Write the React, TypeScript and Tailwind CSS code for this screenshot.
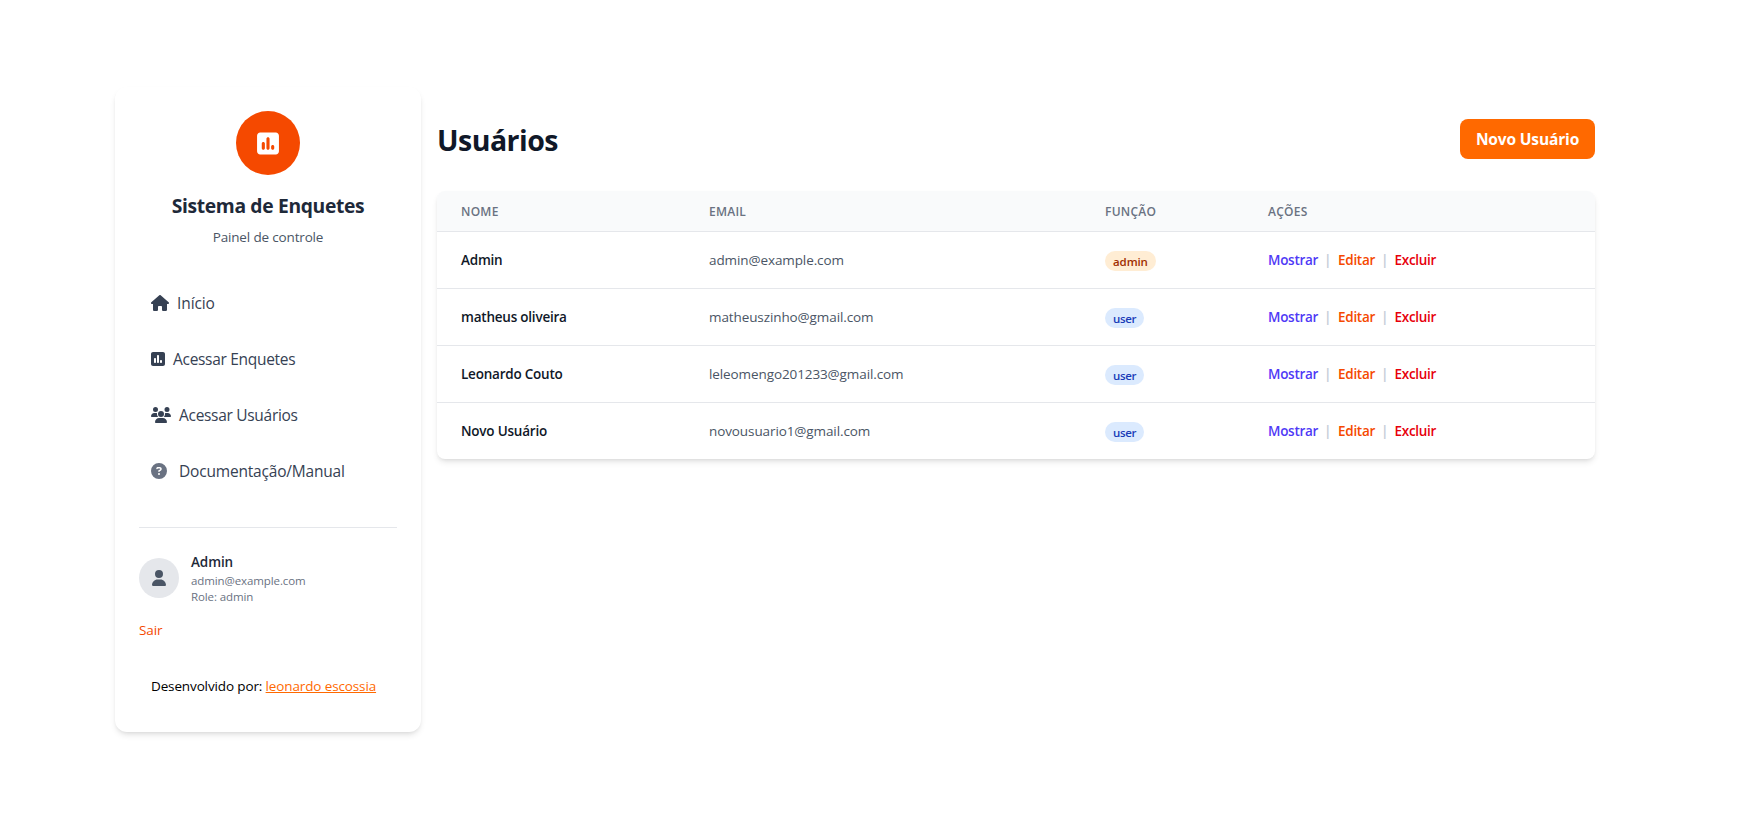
import { FaHouse, FaSquarePollVertical, FaUsers, FaCircleQuestion, FaUser } from "react-icons/fa6";

const users = [
  { name: "Admin", email: "admin@example.com", role: "admin" },
  { name: "matheus oliveira", email: "matheuszinho@gmail.com", role: "user" },
  { name: "Leonardo Couto", email: "leleomengo201233@gmail.com", role: "user" },
  { name: "Novo Usuário", email: "novousuario1@gmail.com", role: "user" },
];

function Sidebar() {
  return (
    <aside className="w-[306px] h-[645px] shrink-0 rounded-xl bg-white p-6 shadow-md">
      <div className="flex flex-col items-center">
        <div className="flex size-16 items-center justify-center rounded-full bg-[#f54900] text-white">
          <FaSquarePollVertical className="h-[25px] w-[22px]" />
        </div>
        <h2 className="mt-4 h-7 pt-px text-[19.3px] leading-7 font-bold tracking-[-0.34px] whitespace-nowrap text-[#1e2939]">Sistema de Enquetes</h2>
        <p className="mt-2 text-[13.5px] leading-5 tracking-[-0.16px] text-[#4a5565]">Painel de controle</p>
      </div>
      <nav className="mt-8 flex flex-col gap-2 text-[15.5px] leading-6 tracking-[-0.3px] text-[#364153]">
        <a className="flex h-12 items-center gap-2 px-3 tracking-[-0.1px]"><FaHouse className="h-4 w-[18px]" />Início</a>
        <a className="flex h-12 items-center gap-2 px-3"><FaSquarePollVertical className="h-4 w-[14px]" />Acessar Enquetes</a>
        <a className="flex h-12 items-center gap-2 px-3"><FaUsers className="h-4 w-5" />Acessar Usuários</a>
        <a className="flex h-12 items-center gap-3 px-3 tracking-[-0.19px]"><FaCircleQuestion className="size-4 text-[#6a7282]" />Documentação/Manual</a>
      </nav>
      <div className="mt-8 border-t border-[#e5e7eb] pt-6">
        <div className="flex items-center gap-3">
          <div className="flex size-10 items-center justify-center rounded-full bg-[#e5e7eb] text-[#4a5565]">
            <FaUser className="h-4 w-[14px]" />
          </div>
          <div>
            <p className="text-[13.5px] leading-5 font-semibold tracking-[-0.1px] text-[#1e2939]">Admin</p>
            <div className="h-8 pt-px text-[11.5px] leading-4 tracking-[-0.1px] text-[#6a7282]">
              <p>admin@example.com</p>
              <p>Role: admin</p>
            </div>
          </div>
        </div>
        <p className="mt-4 text-[13.5px] leading-5 tracking-[-0.13px] text-[#f54900]">Sair</p>
      </div>
      <p className="mt-6 p-3 text-[13.5px] leading-5 tracking-[-0.13px] whitespace-nowrap text-black">
        Desenvolvido por: <a className="text-[#ff6900] underline">leonardo escossia</a>
      </p>
    </aside>
  );
}

function UserTable() {
  return (
    <div className="mt-8 overflow-hidden rounded-lg bg-white shadow-md">
      <div className="grid h-10 grid-cols-[248px_396px_163px_1fr] items-center bg-[#f9fafb] pt-0.5 text-[12px] leading-4 font-semibold tracking-[0.25px] text-[#6a7282] uppercase">
        <span className="pl-6">Nome</span>
        <span className="pl-6">Email</span>
        <span className="pl-6">Função</span>
        <span className="pl-6">Ações</span>
      </div>
      {users.map((u) => (
        <div key={u.email} className="grid h-[57px] grid-cols-[248px_396px_163px_1fr] items-center border-t border-[#e5e7eb] text-[13.5px] leading-5 tracking-[-0.1px]">
          <span className="pl-6 font-semibold tracking-[-0.22px] text-[#101828]">{u.name}</span>
          <span className="pl-6 text-[#4a5565]">{u.email}</span>
          <span className="flex pt-0.5 pl-6">
            <span className={u.role === "admin"
              ? "h-5 rounded-full bg-[#ffedd4] px-2 text-[11.5px] leading-[22px] font-semibold tracking-[-0.1px] text-[#9f2d00]"
              : "h-5 rounded-full bg-[#dbeafe] px-2 text-[11.5px] leading-[22px] font-semibold tracking-[-0.35px] text-[#193cb8]"}>{u.role}</span>
          </span>
          <span className="flex pl-6 font-semibold tracking-[-0.28px]">
            <a className="w-[56px] text-[#4f39f6]">Mostrar</a>
            <span className="w-3.5 font-bold text-[#c9d0da]">|</span>
            <a className="w-[43px] text-[#f54900]">Editar</a>
            <span className="w-[13.5px] font-bold text-[#c9d0da]">|</span>
            <a className="text-[#e7000b]">Excluir</a>
          </span>
        </div>
      ))}
    </div>
  );
}

export default function App() {
  return (
    <div className="flex min-h-screen items-start gap-4 bg-white pt-[87px] pl-[115px] font-['Open_Sans',sans-serif]">
      <Sidebar />
      <main className="w-[1158px] pt-8">
        <div className="flex items-center justify-between">
          <h1 className="pt-px text-[28.5px] leading-9 font-bold tracking-[-0.52px] text-[#101828]">Usuários</h1>
          <button className="h-10 w-[135px] rounded-lg bg-[#ff6900] pt-px text-[15.5px] font-bold tracking-[-0.15px] whitespace-nowrap text-white">Novo Usuário</button>
        </div>
        <UserTable />
      </main>
    </div>
  );
}
